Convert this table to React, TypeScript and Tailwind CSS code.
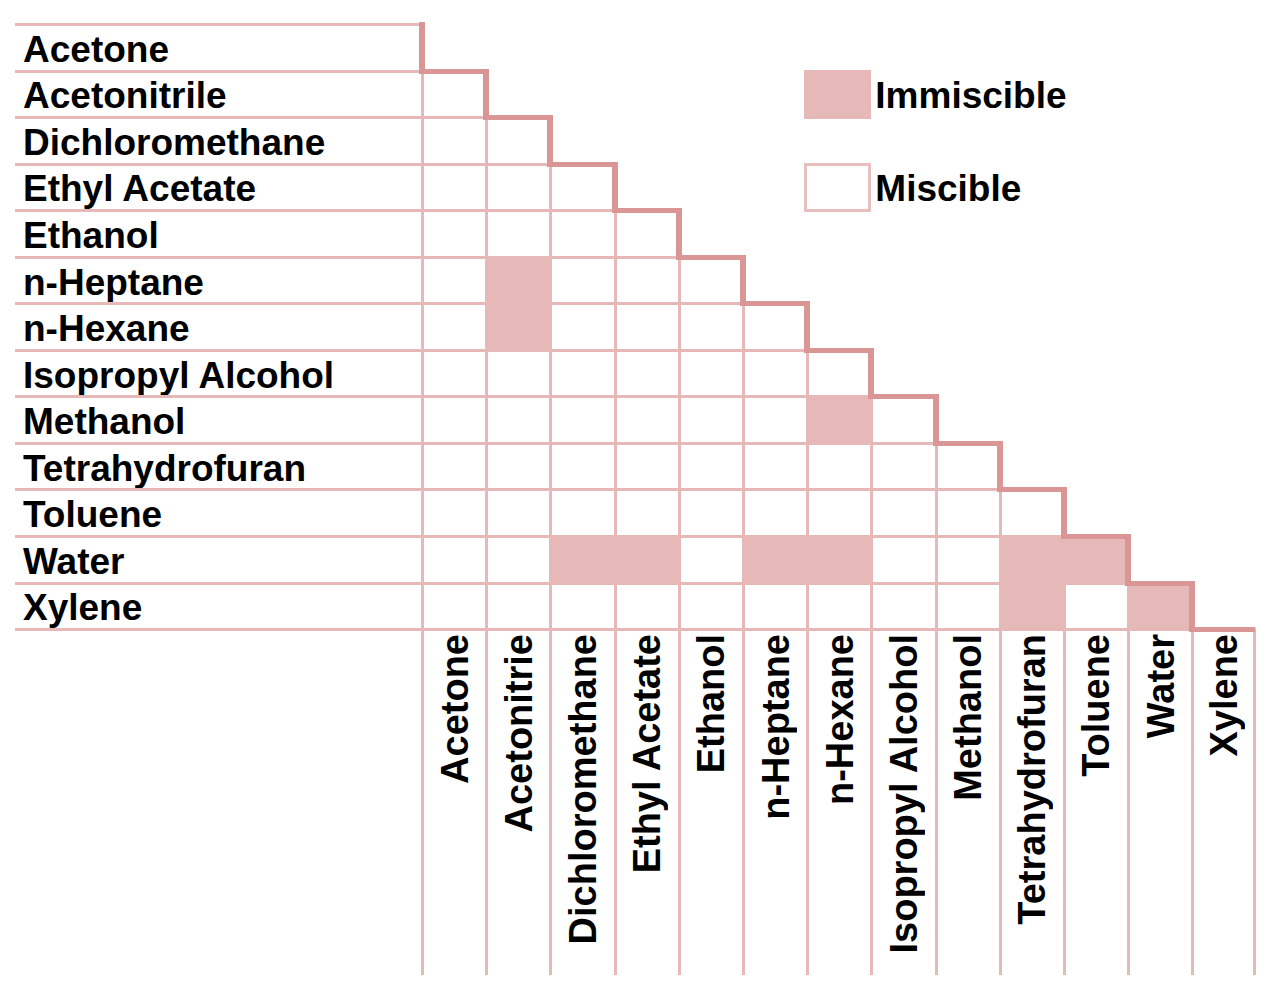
import React, { Fragment } from "react";

const rowNames = [
  "Acetone",
  "Acetonitrile",
  "Dichloromethane",
  "Ethyl Acetate",
  "Ethanol",
  "n-Heptane",
  "n-Hexane",
  "Isopropyl Alcohol",
  "Methanol",
  "Tetrahydrofuran",
  "Toluene",
  "Water",
  "Xylene",
];

const colNames = [
  "Acetone",
  "Acetonitrie",
  "Dichloromethane",
  "Ethyl Acetate",
  "Ethanol",
  "n-Heptane",
  "n-Hexane",
  "Isopropyl Alcohol",
  "Methanol",
  "Tetrahydrofuran",
  "Toluene",
  "Water",
  "Xylene",
];

const immiscible = new Set([
  "5-1",
  "6-1",
  "8-6",
  "11-2",
  "11-3",
  "11-5",
  "11-6",
  "11-9",
  "11-10",
  "12-9",
  "12-11",
]);

function Cell({ r, c }: { r: number; c: number }) {
  if (c < r) {
    const filled = immiscible.has(`${r}-${c}`);
    return (
      <div
        className={
          filled
            ? "border-t-[3px] border-l-[3px] border-[#e6b8b7] bg-[#e6b8b7]"
            : "border-t-[3px] border-l-[3px] border-[#e6b8b7]"
        }
      />
    );
  }
  if (c === r) {
    return (
      <div className="relative z-10 -ml-[2px] -mt-[1px] -mb-[4px] border-l-[6px] border-b-[5px] border-[#d99694]" />
    );
  }
  if (r === 1 && c === 6) {
    return <div className="-ml-[2px] -mr-[1px] -mb-[3px] bg-[#e6b8b7]" />;
  }
  if (r === 3 && c === 6) {
    return (
      <div className="-ml-[2px] -mr-[1px] -mb-[3px] border-[3px] border-[#e8bfbe]" />
    );
  }
  if ((r === 1 || r === 3) && c === 7) {
    return (
      <div className="col-span-6 flex items-center pl-[5px] pt-[6px] text-[37px] leading-none whitespace-nowrap">
        {r === 1 ? "Immiscible" : "Miscible"}
      </div>
    );
  }
  if ((r === 1 || r === 3) && c > 7) {
    return null;
  }
  return <div />;
}

export default function App() {
  return (
    <div className="w-[1282px] h-[994px] bg-white overflow-hidden pt-[23px] pl-[15px] font-['Liberation_Sans',Arial,sans-serif] font-bold text-black">
      <div className="grid grid-cols-[406px_repeat(13,64.2px)] grid-rows-[repeat(13,46.55px)_347px]">
        {rowNames.map((name, r) => (
          <Fragment key={name}>
            <div className="border-t-[3px] border-[#e6b8b7] flex items-center pl-[8px] pt-[3px] text-[37px] leading-none whitespace-nowrap">
              {name}
            </div>
            {colNames.map((_, c) => (
              <Cell key={c} r={r} c={c} />
            ))}
          </Fragment>
        ))}
        <div className="border-t-[3px] border-[#e6b8b7]" />
        {colNames.map((name, c) => (
          <div
            key={name + c}
            className={
              c === 12
                ? "border-t-[3px] border-l-[3px] border-r-[3px] -mr-[1px] border-[#e6b8b7] flex justify-center items-start pt-[3px]"
                : "border-t-[3px] border-l-[3px] border-[#e6b8b7] flex justify-center items-start pt-[3px]"
            }
          >
            <span className="[writing-mode:vertical-rl] rotate-180 text-[38px] leading-none whitespace-nowrap">
              {name}
            </span>
          </div>
        ))}
      </div>
    </div>
  );
}
